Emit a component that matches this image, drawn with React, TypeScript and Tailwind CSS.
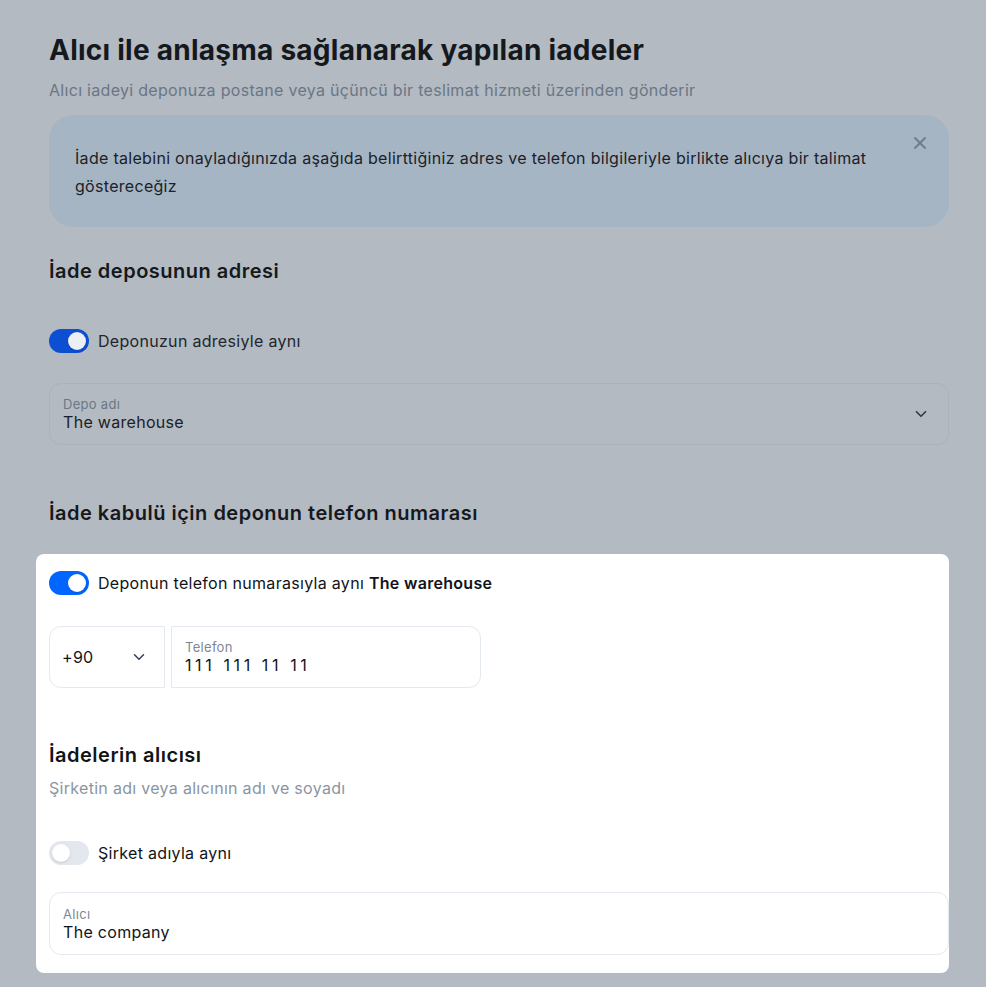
import React from 'react';
import { X, ChevronDown } from 'lucide-react';

// --- Small pieces ---
function Toggle({ on, dim }: { on: boolean; dim?: boolean }) {
  const track = on ? (dim ? 'bg-[#0c4fd2]' : 'bg-[#0066ff]') : 'bg-[#e3e8ee]';
  const knob = dim ? 'bg-[#eceff3]' : 'bg-white';
  return (
    <div className={`w-10 h-6 rounded-full p-[3px] flex shrink-0 ${track} ${on ? 'justify-end' : 'justify-start'}`}>
      <div className={`w-[18px] h-[18px] rounded-full ${knob} shadow-sm`} />
    </div>
  );
}

export default function ReturnsSettings() {
  return (
    <div className="min-h-screen bg-[#b3bac2] font-['Inter',sans-serif] tracking-[0.3px] text-[#1c1f24]">
      <div className="pl-[49px] pr-[37px] pt-8 pb-[14px]">

        {/* --- Header --- */}
        <h1 className="text-[28px] leading-9 font-bold tracking-[0.25px] text-[#15181c]">
          Alıcı ile anlaşma sağlanarak yapılan iadeler
        </h1>
        <p className="mt-[10px] text-base leading-6 text-[#6b7684]">
          Alıcı iadeyi deponuza postane veya üçüncü bir teslimat hizmeti üzerinden gönderir
        </p>

        {/* --- Info banner --- */}
        <div className="mt-[13px] relative bg-[#a6b5c4] rounded-3xl pl-[26px] pr-[60px] pt-[29px] pb-[27px]">
          <p className="text-base leading-7 text-[#1c2128]">
            İade talebini onayladığınızda aşağıda belirttiğiniz adres ve telefon bilgileriyle birlikte alıcıya bir talimat göstereceğiz
          </p>
          <X className="absolute right-[19px] top-[18px] w-5 h-5 text-[#6d7c8c]" strokeWidth={2.2} />
        </div>

        {/* --- Warehouse address --- */}
        <h2 className="mt-[30px] text-xl leading-7 font-semibold tracking-[0.5px] text-[#15181c]">İade deposunun adresi</h2>
        <div className="mt-11 flex items-center gap-[9px]">
          <Toggle on dim />
          <span className="text-base leading-6 text-[#22262c]">Deponuzun adresiyle aynı</span>
        </div>
        <div className="mt-[30px] h-[62px] border border-[#a9b3bd] rounded-xl pl-[13px] pr-[18px] flex items-center justify-between">
          <div className="flex flex-col">
            <span className="text-[13px] leading-4 text-[#6c7785]">Depo adı</span>
            <span className="text-base leading-5 text-[#1c2026]">The warehouse</span>
          </div>
          <ChevronDown className="w-[18px] h-[18px] text-[#2f3a48]" strokeWidth={2.2} />
        </div>

        <h2 className="mt-[54px] text-xl leading-7 font-semibold tracking-[0.5px] text-[#15181c]">İade kabulü için deponun telefon numarası</h2>

        {/* --- Highlighted block --- */}
        <div className="mt-[27px] -ml-[13px] pl-[13px] bg-white rounded-lg pt-[17px] pb-[18px] text-[#111418]">
          <div className="flex items-center gap-[9px]">
            <Toggle on />
            <span className="text-base leading-6">
              Deponun telefon numarasıyla aynı <span className="font-semibold">The warehouse</span>
            </span>
          </div>

          <div className="mt-[31px] flex gap-[6px]">
            <div className="w-[116px] h-[62px] border border-[#e4e9ef] rounded-l-xl pl-[12px] pr-[16px] flex items-center justify-between">
              <span className="text-base">+90</span>
              <ChevronDown className="w-[18px] h-[18px] text-[#334155]" strokeWidth={2} />
            </div>
            <div className="w-[310px] h-[62px] border border-[#e4e9ef] rounded-r-xl pl-[13px] flex flex-col justify-center">
              <span className="text-[13px] leading-4 text-[#7c8794]">Telefon</span>
              <span className="text-base leading-5 tracking-[3.6px]">111 111 11 11</span>
            </div>
          </div>

          {/* --- Recipient --- */}
          <h2 className="mt-[53px] text-xl leading-7 font-semibold tracking-[0.5px]">İadelerin alıcısı</h2>
          <p className="mt-[7px] text-base leading-6 text-[#8a95a2]">Şirketin adı veya alıcının adı ve soyadı</p>

          <div className="mt-[41px] flex items-center gap-[9px]">
            <Toggle on={false} />
            <span className="text-base leading-6">Şirket adıyla aynı</span>
          </div>

          <div className="mt-[27px] h-[63px] border border-[#e4e9ef] rounded-xl pl-[13px] flex flex-col justify-center">
            <span className="text-[13px] leading-4 text-[#7c8794]">Alıcı</span>
            <span className="text-base leading-5">The company</span>
          </div>
        </div>

      </div>
    </div>
  );
}
